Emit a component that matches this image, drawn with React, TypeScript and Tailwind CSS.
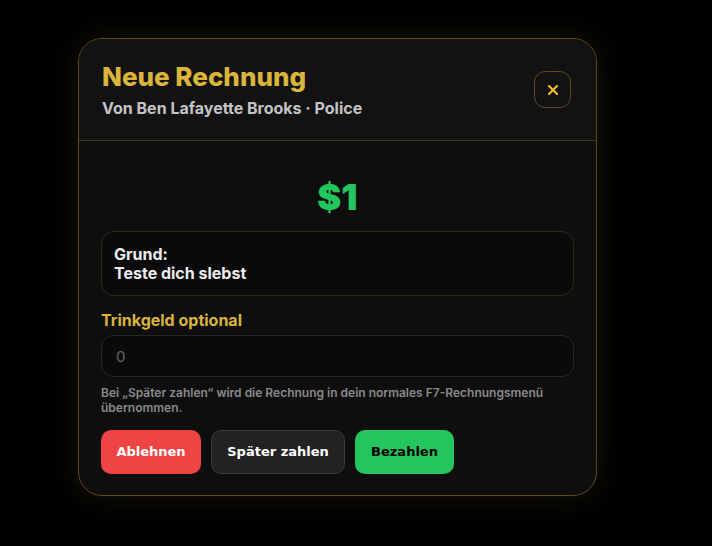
export default function App() {
  return (
    <div className="min-h-screen w-full bg-black" style={{ fontFamily: 'Inter, "Noto Sans", sans-serif' }}>
      <div className="pl-[78px] pt-[38px]">
        <div className="w-[519px] overflow-hidden rounded-[24px] border border-[#5a4a1c] bg-[#0e0e0e] shadow-[0_0_32px_rgba(212,175,55,0.12)]">
          {/* header */}
          <div className="flex items-center justify-between border-b border-[#3b3218] bg-[#121212] pb-[22px] pl-[23px] pr-[25px] pt-[22px]">
            <div>
              <h1 className="text-[26px] font-extrabold leading-[32px] text-[#dbb43b]">Neue Rechnung</h1>
              <p className="mt-[5px] text-[16px] font-bold leading-[20px] text-[#c4c4c4]">
                Von Ben Lafayette Brooks · Police
              </p>
            </div>
            <button className="flex h-[37px] w-[37px] items-center justify-center rounded-[11px] border border-[#5a4a1c] bg-[#121212]">
              <svg width="12" height="12" viewBox="0 0 12 12" fill="none">
                <path d="M2 2L10 10M10 2L2 10" stroke="#e8bc2c" strokeWidth="2.2" strokeLinecap="round" />
              </svg>
            </button>
          </div>

          {/* body */}
          <div className="px-[22px] pb-[21px] pt-[36px]">
            <div className="text-center text-[36px] font-black leading-[40px] text-[#22c55e]">$1</div>

            <div className="mt-[14px] rounded-[13px] border border-[#2f2916] bg-[#0a0a0a] px-[12px] pb-[12px] pt-[13px] text-[16px] font-bold leading-[19px] text-[#ededed]">
              <div>Grund:</div>
              <div>Teste dich slebst</div>
            </div>

            <div className="mt-[14px] text-[16px] font-bold leading-[20px] text-[#dbb43b]">Trinkgeld optional</div>
            <input
              placeholder="0"
              className="mt-[5px] h-[42px] w-full rounded-[12px] border border-[#262626] bg-[#0a0a0a] px-[14px] text-[15px] text-[#ddd] outline-none placeholder:text-[#666]"
            />

            <p className="mt-[8px] text-[12px] font-semibold leading-[15px] text-[#8a8a8a]">
              Bei „Später zahlen“ wird die Rechnung in dein normales F7-Rechnungsmenü übernommen.
            </p>

            <div className="mt-[15px] flex gap-[10px]" style={{ fontFamily: '"DejaVu Sans", Verdana, sans-serif' }}>
              <button className="h-[44px] w-[100px] rounded-[10px] bg-[#ef4444] text-[13px] font-bold text-white">
                Ablehnen
              </button>
              <button className="h-[44px] w-[134px] rounded-[10px] border border-[#3a3a3a] bg-[#222222] text-[13px] font-bold text-white">
                Später zahlen
              </button>
              <button className="h-[44px] w-[99px] rounded-[10px] bg-[#22c55e] text-[13px] font-bold text-black">
                Bezahlen
              </button>
            </div>
          </div>
        </div>
      </div>
    </div>
  );
}
